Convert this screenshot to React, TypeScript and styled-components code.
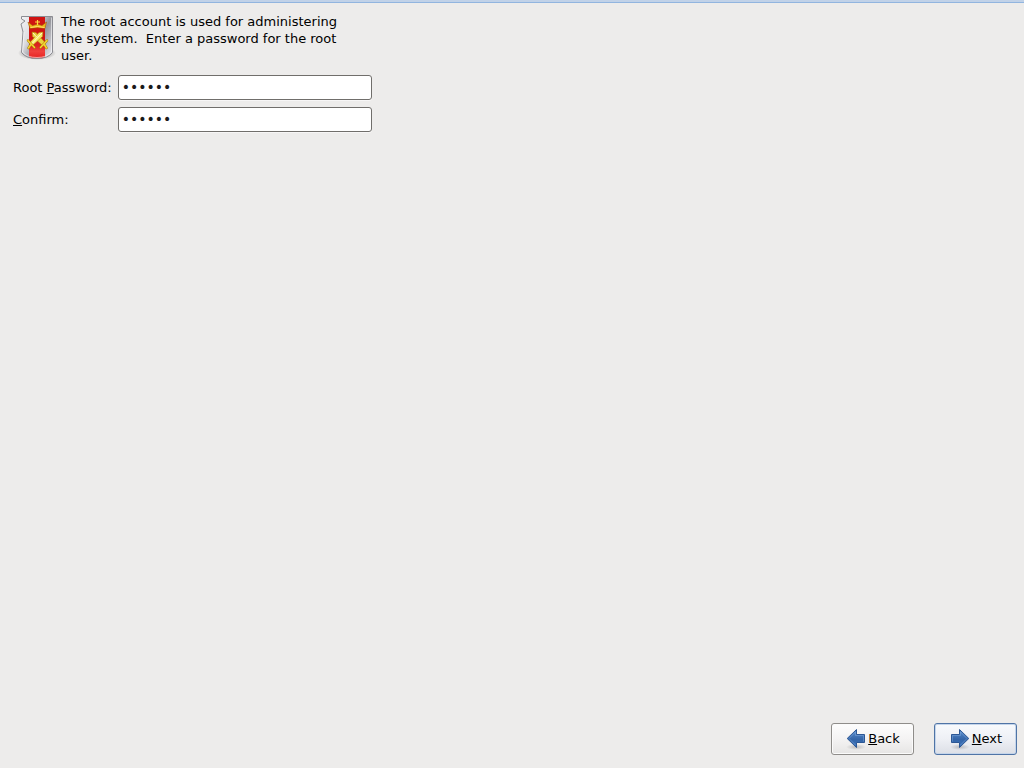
import React from "react";
import styled, { createGlobalStyle, css } from "styled-components";

const GlobalStyle = createGlobalStyle`
  * { box-sizing: border-box; }
  body {
    margin: 0;
    background: #edeceb;
    color: #000;
    font: 13px/17px "DejaVu Sans", sans-serif;
  }
`;

const Screen = styled.div`
  min-height: 100vh;
  display: flex;
  flex-direction: column;
  border-top: 2px solid #c1d2e8;
`;

const Content = styled.main`
  flex: 1;
  border-top: 1px solid #92b5df;
  padding: 9px 12px 0;
`;

const Intro = styled.header`
  display: flex;
  align-items: center;
`;

const Description = styled.p`
  margin: 0;
  max-width: 290px;
  white-space: pre-wrap;
`;

const Form = styled.form`
  display: grid;
  grid-template-columns: max-content minmax(120px, 254px);
  gap: 7px 6px;
  align-items: center;
  padding: 11px 0 0 1px;
`;

const Field = styled.input`
  width: 100%;
  height: 25px;
  padding: 0 3px 1px;
  border: 1px solid #706e6b;
  border-radius: 3px;
  background: #fff;
  box-shadow: 0 1px 0 #f7f6f6;
  color: #1a1a1a;
  font: inherit;
  font-size: 14px;
  outline: none;
`;

const Mnemonic = styled.span`
  text-decoration: underline;
  text-decoration-thickness: 1px;
  text-underline-offset: 1px;
`;

const Footer = styled.footer`
  display: flex;
  justify-content: flex-end;
  gap: 20px;
  padding: 0 7px 13px;
`;

const NavButton = styled.button<{ $primary?: boolean }>`
  width: 83px;
  height: 32px;
  display: flex;
  align-items: center;
  justify-content: center;
  gap: 1px;
  padding: 0 0 2px;
  border: 1px solid #8f8d8a;
  border-radius: 3px;
  background: linear-gradient(#fdfdfd, #f4f3f3 50%, #e6e5e4);
  box-shadow: inset 0 0 0 1px #fbfbfb;
  color: #000;
  font: inherit;
  ${(p) =>
    p.$primary &&
    css`
      border-color: #4f74a6;
      background: linear-gradient(#f8fafd, #eef0f5 50%, #dcdfe6);
      box-shadow: inset 0 0 0 1px #c5d5ea;
    `}
`;

const ArrowSvg = styled.svg`
  flex: none;
  margin-top: 2px;
`;

function Arrow({ direction }: { direction: "left" | "right" }) {
  const id = `arrow-${direction}`;
  return (
    <ArrowSvg width="22" height="22" viewBox="0 0 22 22" aria-hidden="true">
      <defs>
        <linearGradient id={id} x1="0" y1="0" x2="0" y2="1">
          <stop offset="0" stopColor="#5b8fcf" />
          <stop offset="0.55" stopColor="#3465a8" />
          <stop offset="1" stopColor="#3c74bd" />
        </linearGradient>
        <radialGradient id={`${id}-shade`}>
          <stop offset="0" stopColor="#000" stopOpacity="0.2" />
          <stop offset="1" stopColor="#000" stopOpacity="0" />
        </radialGradient>
      </defs>
      <ellipse cx="11" cy="19" rx="10" ry="3" fill={`url(#${id}-shade)`} />
      <g transform={direction === "left" ? "translate(22 0) scale(-1 1)" : undefined}>
        <path d="M2.500 6.500H10.500V1.500L19.800 10.500L10.500 19.500V14.500H2.500Z" fill={`url(#${id})`} stroke="#2c5795" />
        <path d="M3.500 13.500V7.500H11.500V4L18 10.500L11.500 17" fill="none" stroke="#8cb4e5" strokeOpacity="0.4" />
      </g>
    </ArrowSvg>
  );
}

function ShieldIcon() {
  return (
    <svg width="49" height="52" viewBox="0 0 49 52" aria-hidden="true">
      <defs>
        <linearGradient id="silver" x1="0" y1="0" x2="1" y2="0.7">
          <stop offset="0" stopColor="#f7f7f8" />
          <stop offset="0.4" stopColor="#dcdce0" />
          <stop offset="0.65" stopColor="#96969c" />
          <stop offset="1" stopColor="#dcdce2" />
        </linearGradient>
        <linearGradient id="red" x1="0" y1="0" x2="0" y2="1">
          <stop offset="0" stopColor="#d01412" />
          <stop offset="0.5" stopColor="#cf1512" />
          <stop offset="0.68" stopColor="#dc2422" />
          <stop offset="0.8" stopColor="#f0403c" />
          <stop offset="1" stopColor="#e41c1c" />
        </linearGradient>
        <radialGradient id="shield-shade">
          <stop offset="0" stopColor="#000" stopOpacity="0.5" />
          <stop offset="0.7" stopColor="#000" stopOpacity="0.2" />
          <stop offset="1" stopColor="#000" stopOpacity="0" />
        </radialGradient>
        <clipPath id="shield-clip">
          <path d="M9.500 4.500H40.500V40.500Q36 46.500 25 46.500Q14 46.500 9.500 40.500L11 20L9 12L13 9L9.500 7Z" />
        </clipPath>
      </defs>
      <ellipse cx="25" cy="41" rx="19" ry="7" fill="url(#shield-shade)" />
      <g clipPath="url(#shield-clip)">
        <rect x="8" y="3" width="34" height="45" fill="url(#silver)" />
        <path d="M17 4H33V48H17Z" fill="url(#red)" />
      </g>
      <path d="M9.500 4.500H40.500V40.500Q36 46.500 25 46.500Q14 46.500 9.500 40.500L11 20L9 12L13 9L9.500 7Z" fill="none" stroke="#8c8c92" />
      <path d="M39.500 5.500V40Q35 45.500 25 45.500Q15 45.500 10.500 40L12 20" fill="none" stroke="#fff" strokeOpacity="0.55" />
      <path d="M18 16.500L16 10L20.500 13.500L25.500 12L30 13.500L34.500 10L33 16.500Q25.500 15 18 16.500Z" fill="#eeb61a" stroke="#a14d08" strokeWidth="0.600" />
      <path d="M25.500 8V13M23 10H28" stroke="#ffd83d" strokeWidth="1.200" />
      <path d="M18.500 15.500Q25.500 13.500 32.500 15.500" fill="none" stroke="#ffe36a" />
      <g stroke="#a97a00" strokeWidth="0.500" strokeLinejoin="round">
        <path d="M20 20L24 20.500L33.500 31L31 34L20.500 24.500Z" fill="#ecd040" />
        <path d="M31 20L27 20.500L17.500 31L20 34L30.500 24.500Z" fill="#f7e763" />
      </g>
      <path d="M30 21L19.500 32" stroke="#fffbd0" strokeWidth="1" />
      <path d="M21 21L24.500 25" stroke="#fffbd0" strokeWidth="1" />
      <g fill="none" strokeLinecap="round">
        <path d="M16 28.500L22.500 35.500M35 28.500L28.500 35.500M18.500 33L16.500 36M32.500 33L34.500 36" stroke="#a87500" strokeWidth="2.400" />
        <path d="M16 28.500L22.500 35.500M35 28.500L28.500 35.500M18.500 33L16.500 36M32.500 33L34.500 36" stroke="#f4d634" strokeWidth="1.500" />
      </g>
    </svg>
  );
}

export default function App() {
  return (
    <>
      <GlobalStyle />
      <Screen>
        <Content>
          <Intro>
            <ShieldIcon />
            <Description>
              {"The root account is used for administering the system.  Enter a password for the root user."}
            </Description>
          </Intro>
          <Form id="root-password-form">
            <label htmlFor="password">
              Root <Mnemonic>P</Mnemonic>assword:
            </label>
            <Field id="password" type="password" defaultValue="secret" autoComplete="new-password" />
            <label htmlFor="confirm">
              <Mnemonic>C</Mnemonic>onfirm:
            </label>
            <Field id="confirm" type="password" defaultValue="secret" autoComplete="new-password" />
          </Form>
        </Content>
        <Footer>
          <NavButton type="button">
            <Arrow direction="left" />
            <span><Mnemonic>B</Mnemonic>ack</span>
          </NavButton>
          <NavButton type="submit" form="root-password-form" $primary>
            <Arrow direction="right" />
            <span><Mnemonic>N</Mnemonic>ext</span>
          </NavButton>
        </Footer>
      </Screen>
    </>
  );
}
